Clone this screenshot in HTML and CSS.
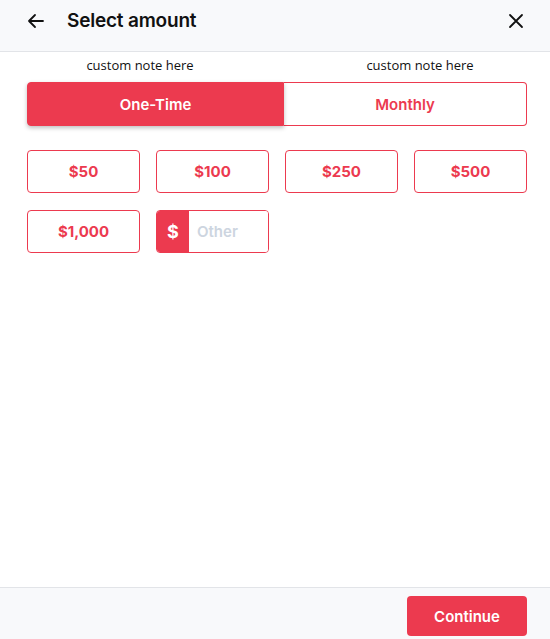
FILE: index.html
```html
<!DOCTYPE html>
<html lang="en">
<head>
  <meta charset="UTF-8" />
  <meta name="viewport" content="width=device-width, initial-scale=1" />
  <title>Select amount</title>
  <link rel="stylesheet" href="styles.css">
</head>
<body>

<div class="panel">
  <div class="header">
    <button class="icon-btn" aria-label="Back">
      <svg width="20" height="20" viewBox="0 0 20 20" fill="none" stroke="#111" stroke-width="1.8" stroke-linecap="round" stroke-linejoin="round">
        <path d="M17 10H3M9 4l-6 6 6 6"/>
      </svg>
    </button>
    <h1>Select amount</h1>
    <button class="icon-btn close" aria-label="Close">
      <svg width="18" height="18" viewBox="0 0 18 18" fill="none" stroke="#111" stroke-width="1.8" stroke-linecap="round">
        <path d="M3 3l12 12M15 3L3 15"/>
      </svg>
    </button>
  </div>

  <div class="content">
    <div class="notes">
      <span>custom note here</span>
      <span>custom note here</span>
    </div>

    <div class="body-pad">
      <div class="toggle">
        <button class="toggle-opt active">One-Time</button>
        <button class="toggle-opt">Monthly</button>
      </div>

      <div class="amounts">
        <button class="amount">$50</button>
        <button class="amount">$100</button>
        <button class="amount">$250</button>
        <button class="amount">$500</button>
        <button class="amount">$1,000</button>
        <label class="other">
          <span class="other-sign">$</span>
          <input type="text" placeholder="Other" />
        </label>
      </div>
    </div>
  </div>

  <div class="footer">
    <button class="continue">Continue</button>
  </div>
</div>

</body>
</html>
```

FILE: styles.css
```css
:root {
  --red: #ec3a4f;
  --bar-bg: #f8f9fb;
  --line: #e2e4e8;
}

* {
  box-sizing: border-box;
  margin: 0;
  padding: 0;
}

body {
  font-family: Inter, 'Noto Sans', sans-serif;
  background: #fff;
  color: #111;
}

.panel {
  width: 550px;
  height: 639px;
  display: flex;
  flex-direction: column;
  overflow: hidden;
}

button {
  font-family: inherit;
  cursor: pointer;
  background: none;
  border: none;
}

/* header */
.header {
  height: 52px;
  background: var(--bar-bg);
  border-bottom: 1px solid var(--line);
  display: flex;
  align-items: flex-start;
  padding: 10px 24px 0 26px;
}

.icon-btn {
  display: flex;
  align-items: center;
  justify-content: center;
  width: 20px;
  height: 22px;
}

.header h1 {
  font-size: 19px;
  font-weight: 600;
  line-height: 22px;
  margin-left: 21px;
  flex: 1;
  letter-spacing: -0.2px;
}

/* content */
.content {
  flex: 1;
  padding-top: 2px;
}

.notes {
  display: flex;
  font-family: 'Open Sans', sans-serif;
  font-size: 13px;
  color: #111;
  height: 22px;
  align-items: center;
}

.notes span {
  width: 280px;
  flex-shrink: 0;
  text-align: center;
}

.body-pad {
  padding: 0 23px 0 27px;
}

.toggle {
  display: flex;
  height: 44px;
  margin-top: 6px;
  width: 500px;
}

.toggle-opt {
  width: 243px;
  font-size: 15px;
  font-weight: 600;
  color: var(--red);
  border: 1px solid var(--red);
  border-left: none;
  border-radius: 0 4px 4px 0;
  background: #fff;
}

.toggle-opt.active {
  width: 257px;
  background: var(--red);
  color: #fff;
  border-radius: 4px 0 0 4px;
  border-left: 1px solid var(--red);
  box-shadow: 0 2px 4px rgba(0, 0, 0, 0.25);
  position: relative;
  z-index: 1;
}

.amounts {
  display: grid;
  grid-template-columns: repeat(4, 113px);
  column-gap: 16px;
  row-gap: 17px;
  margin-top: 24px;
}

.amount {
  height: 43px;
  border: 1px solid var(--red);
  border-radius: 4px;
  background: #fff;
  color: var(--red);
  font-size: 15px;
  font-weight: 700;
}

.other {
  display: flex;
  height: 43px;
  border: 1px solid var(--red);
  border-radius: 4px;
  overflow: hidden;
}

.other-sign {
  width: 32px;
  background: var(--red);
  color: #fff;
  font-size: 18px;
  font-weight: 700;
  display: flex;
  align-items: center;
  justify-content: center;
}

.other input {
  width: 0;
  flex: 1;
  border: none;
  outline: none;
  padding-left: 8px;
  font-family: inherit;
  font-size: 15px;
  font-weight: 600;
  color: #111;
}

.other input::placeholder {
  color: #cdd5e0;
}

/* footer */
.footer {
  height: 52px;
  background: var(--bar-bg);
  border-top: 1px solid var(--line);
  display: flex;
  justify-content: flex-end;
  align-items: flex-start;
  padding: 8px 23px 0 0;
}

.continue {
  width: 120px;
  height: 40px;
  background: var(--red);
  color: #fff;
  border-radius: 4px;
  font-size: 15px;
  font-weight: 600;
}
```
